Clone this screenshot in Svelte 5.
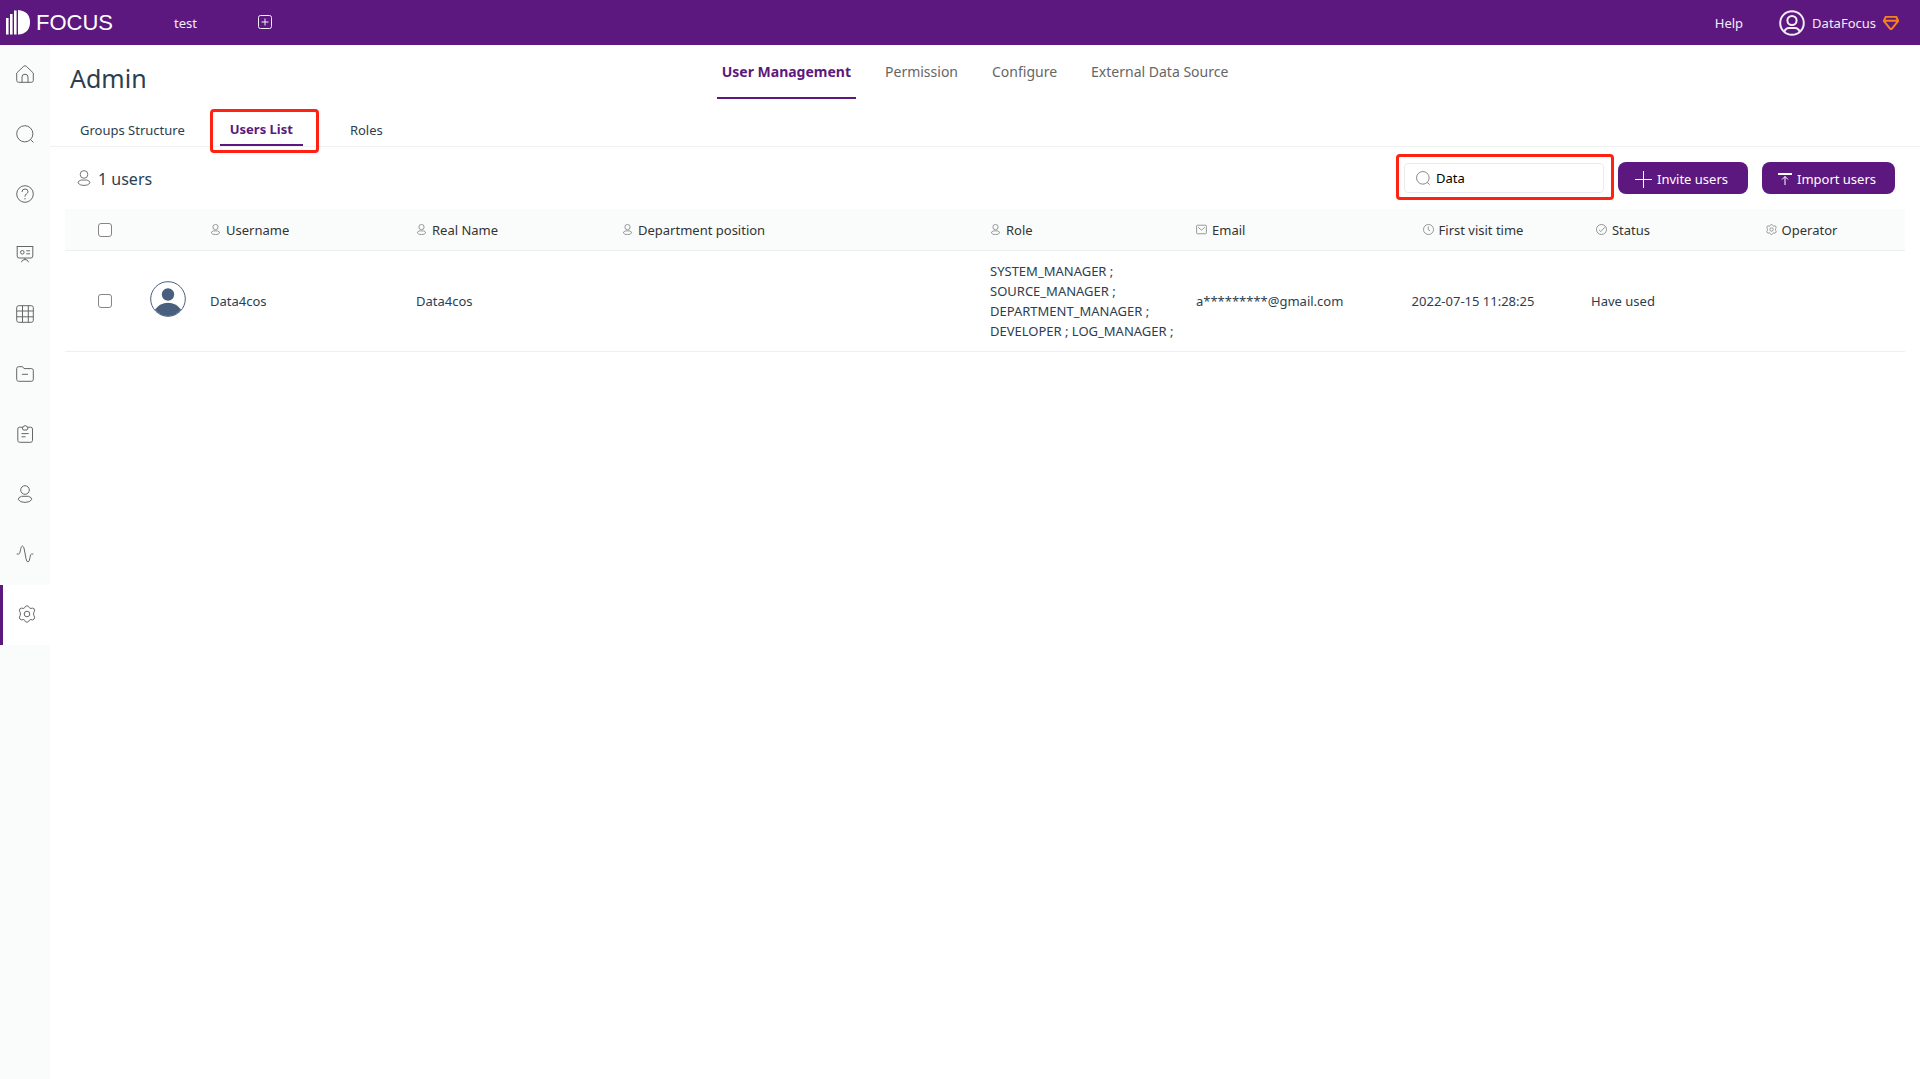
<script>
  let search = $state('Data');
  let page = $state('User Management');
  let tab = $state('Users List');

  const pages = ['User Management', 'Permission', 'Configure', 'External Data Source'];
  const tabs = ['Groups Structure', 'Users List', 'Roles'];
  const nav = ['home', 'search', 'help', 'board', 'table', 'folder', 'task', 'user', 'pulse', 'gear'];

  const columns = [
    { label: 'Username', icon: 'user' },
    { label: 'Real Name', icon: 'user' },
    { label: 'Department position', icon: 'user' },
    { label: 'Role', icon: 'user' },
    { label: 'Email', icon: 'mail' },
    { label: 'First visit time', icon: 'clock', center: true },
    { label: 'Status', icon: 'check', center: true },
    { label: 'Operator', icon: 'gear', center: true }
  ];

  // check, avatar, then one width per column
  const widths = [80, 61, 206, 206, 368, 206, 206, 150, 150, 207];

  const users = [
    {
      username: 'Data4cos',
      realName: 'Data4cos',
      department: '',
      roles: ['SYSTEM_MANAGER', 'SOURCE_MANAGER', 'DEPARTMENT_MANAGER', 'DEVELOPER', 'LOG_MANAGER'],
      email: 'a*********@gmail.com',
      visited: '2022-07-15 11:28:25',
      status: 'Have used'
    }
  ];
</script>

{#snippet icon(name, cls)}
  <svg class="icon {cls}" viewBox="0 0 18 18" aria-hidden="true">
    {#if name === 'home'}
      <path d="M.7 8 L7.8 1.2 Q9 .2 10.2 1.2 L17.3 8 V15.4 Q17.3 17.3 15.4 17.3 H2.6 Q.7 17.3 .7 15.4 Z" />
      <path d="M6 17.3 V12 Q6 9.2 9 9.2 Q12 9.2 12 12 V17.3" />
    {:else if name === 'search'}
      <circle cx="8.8" cy="8.8" r="8.1" />
      <path d="M14.5 14.6 L17.5 17.5" />
    {:else if name === 'help'}
      <circle cx="9" cy="9" r="8.3" />
      <path d="M6 7 Q6 4 9 4 Q12 4 12 6.6 Q12 8 10.3 9 Q9 9.8 9 11.6 M9 13 V14.4" />
    {:else if name === 'board'}
      <path d="M.7 1.5 H17.3 M1.2 1.5 V11 Q1.2 13 3 13 H15 Q16.8 13 16.8 11 V1.5 M9 13 V14.5 M5.4 17.2 Q6 14.5 9 14.5 Q12 14.5 12.6 17.2" />
      <circle cx="6.3" cy="7.3" r="1.8" />
      <path d="M10.3 5.8 H14 M10.3 8.8 H14" />
    {:else if name === 'table'}
      <rect x=".7" y=".7" width="16.6" height="16.6" rx="2" />
      <path d="M6.5 .7 V17.3 M12.3 .7 V17.3 M.7 6 H17.3 M.7 11.8 H17.3" />
    {:else if name === 'folder'}
      <path d="M.7 14.4 V3.6 Q.7 1.7 2.6 1.7 H6 Q7 1.7 7.4 2.6 L8 3.6 H15.4 Q17.3 3.6 17.3 5.5 V14.4 Q17.3 16.3 15.4 16.3 H2.6 Q.7 16.3 .7 14.4 Z M6 9.3 H12" />
    {:else if name === 'task'}
      <path d="M6 2.2 H3.7 Q1.8 2.2 1.8 4 V15.4 Q1.8 17.3 3.7 17.3 H14.6 Q16.5 17.3 16.5 15.4 V4 Q16.5 2.2 14.6 2.2 H12.3 M6 2.2 L7.2 5 H11 L12.3 2.2 H11 Q11 .7 9.2 .7 Q7.3 .7 7.3 2.2 Z M5.5 8.6 H12.7 M5.5 11.8 H9.5" />
    {:else if name === 'user'}
      <circle cx="9" cy="5" r="4.3" />
      <path d="M5.6 11.3 H12.4 Q15.8 12.3 15.8 14.5 Q14 17.4 9 17.4 Q4 17.4 2.2 14.5 Q2.2 12.3 5.6 11.3 Z" />
    {:else if name === 'pulse'}
      <path d="M.7 9 H2.5 Q3.6 9 4 7.2 Q5 1 6.5 1 Q8 1 8.6 6 L10 13.6 Q10.6 17 12 17 Q13.4 17 14 12.5 Q14.3 9 15.6 9 H17.3" />
    {:else if name === 'gear'}
      <path d="M7.3 1.5 Q9 -.1 10.7 1.5 L11.4 2.8 Q12 3.6 13 3.4 L14.6 3.1 Q16.8 3.4 16.6 5.8 L15.8 7.4 Q15.3 9 15.8 10.4 L16.6 12.2 Q16.8 14.4 14.6 14.9 L13 14.6 Q12 14.4 11.4 15.2 L10.7 16.5 Q9 18.1 7.3 16.5 L6.6 15.2 Q6 14.4 5 14.6 L3.4 14.9 Q1.2 14.4 1.4 12.2 L2.2 10.4 Q2.7 9 2.2 7.4 L1.4 5.8 Q1.2 3.4 3.4 3.1 L5 3.4 Q6 3.6 6.6 2.8 Z" />
      <circle cx="9" cy="9" r="2.8" />
    {:else if name === 'mail'}
      <rect x="1" y="2" width="16" height="14" rx="1.5" />
      <path d="M3.6 5.5 L9 10 L14.4 5.5" />
    {:else if name === 'clock'}
      <circle cx="9" cy="9" r="8.2" />
      <path d="M8.6 4 V9.4 L11.6 11.4" />
    {:else if name === 'check'}
      <circle cx="9" cy="9" r="8.2" />
      <path d="M4.8 9.4 L8 12.4 L14.6 5.2" />
    {/if}
  </svg>
{/snippet}

<header class="topbar">
  <a class="logo" href="#home">
    <svg width="24" height="25" viewBox="0 0 24 25" aria-hidden="true">
      <path d="M0 8 H2.6 V24.6 H0 Z M4 4 H6.6 V24.6 H4 Z M8 .6 H10.6 V24.6 H8 Z M12 0 Q24 1 24 12.3 Q24 23.6 12 24.6 Z" />
    </svg>
    <span>FOCUS</span>
  </a>
  <a class="project" href="#test">test</a>
  <button class="add" aria-label="Add">
    <svg width="14" height="14" viewBox="0 0 14 14"><rect x=".5" y=".5" width="13" height="13" rx="2" /><path d="M7 3.5 V10.5 M3.5 7 H10.5" /></svg>
  </button>
  <a class="help" href="#help">Help</a>
  <button class="account">
    <svg width="26" height="26" viewBox="0 0 26 26" aria-hidden="true">
      <circle cx="13" cy="13" r="11.8" />
      <circle cx="13" cy="10.5" r="4.6" />
      <path d="M5.4 21.8 Q6.5 18 10 18 H16 Q19.5 18 20.6 21.8" />
    </svg>
    <span>DataFocus</span>
    <svg class="gem" width="16" height="14" viewBox="0 0 16 14" aria-hidden="true">
      <path d="M2.8 .8 H13.2 L15.2 4.8 L9 12.6 Q8 13.6 7 12.6 L.8 4.8 Z M1 4.8 H15" />
    </svg>
  </button>
</header>

<div class="body">
  <nav class="side">
    {#each nav as item}
      <a href="#{item}" class:active={item === 'gear'} aria-label={item}>{@render icon(item, 'md')}</a>
    {/each}
  </nav>

  <main>
    <div class="head">
      <h1>Admin</h1>
      <div class="pages">
        {#each pages as p}
          <button class:on={page === p} onclick={() => (page = p)}>{p}</button>
        {/each}
      </div>
    </div>

    <div class="tabs">
      {#each tabs as t}
        <div class="tab" class:marked={t === 'Users List'}>
          <button class:on={tab === t} onclick={() => (tab = t)}>{t}</button>
        </div>
      {/each}
    </div>

    <div class="toolbar">
      {@render icon('user', 'count')}
      <span class="total">{users.length} users</span>
      <label class="search">
        {@render icon('search', 'sm')}
        <input type="text" bind:value={search} aria-label="Search users" />
      </label>
      <button class="primary">
        <svg width="17" height="17" viewBox="0 0 17 17" aria-hidden="true"><path d="M8.5 0 V17 M0 8.5 H17" /></svg>
        Invite users
      </button>
      <button class="primary import">
        <svg width="14" height="14" viewBox="0 0 14 14" aria-hidden="true"><path class="bar" d="M0 2 H14" /><path d="M7 13 V4.5 M4 7.5 L7 4.5 L10 7.5" /></svg>
        Import users
      </button>
    </div>

    <table>
      <colgroup>
        {#each widths as w}<col style="width: {w}px" />{/each}
      </colgroup>
      <thead>
        <tr>
          <th class="pick"><input type="checkbox" aria-label="Select all" /></th>
          <th></th>
          {#each columns as c}
            <th class:center={c.center}>{@render icon(c.icon, 'xs')}{c.label}</th>
          {/each}
        </tr>
      </thead>
      <tbody>
        {#each users as u}
          <tr>
            <td class="pick"><input type="checkbox" aria-label="Select {u.username}" /></td>
            <td class="face">
              <svg class="avatar" viewBox="0 0 36 36" aria-hidden="true">
                <circle class="ring" cx="18" cy="18" r="17.3" />
                <circle cx="18" cy="13.5" r="6.2" />
                <path d="M5 28.4 Q10 21.8 18 21.8 Q26 21.8 31 28.4 Q26 35 18 35 Q10 35 5 28.4 Z" />
              </svg>
            </td>
            <td>{u.username}</td>
            <td>{u.realName}</td>
            <td>{u.department}</td>
            <td>{u.roles.map((r) => r + ' ;').join(' ')}</td>
            <td>{u.email}</td>
            <td class="center">{u.visited}</td>
            <td class="center">{u.status}</td>
            <td></td>
          </tr>
        {/each}
      </tbody>
    </table>
  </main>
</div>

<style>
  :global(body) { background: #fff; color: #2c3e50; font-family: 'Noto Sans', 'Open Sans', sans-serif; font-size: 13px; line-height: 20px; }
  :global(#app) { min-height: 100vh; display: flex; flex-direction: column; }
  button { border: 0; background: none; padding: 0; font: inherit; color: inherit; cursor: pointer; }
  a { color: inherit; text-decoration: none; }
  svg { display: block; flex: none; }
  .icon { fill: none; stroke: #666; stroke-width: 1; }
  .md { width: 18px; height: 18px; }
  .count { width: 16px; height: 16px; }
  .sm { width: 14px; height: 14px; }
  .xs { width: 11px; height: 11px; display: inline-block; margin-right: 5px; stroke: #888; stroke-width: 1.4; }

  .topbar { display: flex; align-items: center; height: 45px; box-sizing: border-box; padding: 0 21px 0 6px; background: #5d187f; color: #f3edf6; }
  .logo { display: flex; align-items: center; gap: 6px; width: 168px; color: #fff; font-family: 'Liberation Sans', Arial, sans-serif; font-size: 22px; }
  .logo svg { fill: #fff; }
  .project { width: 84px; }
  .add svg { fill: none; stroke: #f3edf6; stroke-width: 1; }
  .add { padding-bottom: 2px; }
  .help { margin-left: auto; }
  .account { display: flex; align-items: center; gap: 7px; margin-left: 36px; }
  .account svg { fill: none; stroke: #f3edf6; stroke-width: 2; }
  .account .gem { stroke: #f5821f; }

  .body { display: flex; flex: 1; }
  .side { width: 50px; flex: none; background: #fafcfb; }
  .side a { display: flex; align-items: center; justify-content: center; height: 60px; box-sizing: border-box; padding-bottom: 2px; }
  .side .active { background: #fff; border-left: 3px solid #5d187f; }
  main { flex: 1; min-width: 0; }

  .head { display: grid; grid-template-columns: 1fr auto 1fr; padding: 0 20px 10px 0; }
  h1 { margin: 0; padding: 15px 0 0 20px; font-size: 25px; font-weight: 400; line-height: 36px; }
  .pages { display: flex; gap: 24px; }
  .pages button { height: 54px; box-sizing: border-box; padding: 2px 5px 0; border-bottom: 2px solid transparent; font-size: 14px; color: #666; }
  .pages .on { border-color: #5d187f; color: #5d187f; font-weight: 700; }

  .tabs { display: flex; gap: 25px; height: 37px; padding-left: 20px; border-bottom: 1px solid #f0f2f2; }
  .tab { position: relative; display: flex; }
  .tab button { padding: 6px 10px 0; border-bottom: 2px solid transparent; }
  .tab .on { padding-top: 4px; border-color: #5d187f; color: #5d187f; font-weight: 700; }
  .marked { margin-right: 12px; }
  .marked::after { content: ''; position: absolute; inset: 0 -16px -7px -10px; border: 3px solid #ff2213; border-radius: 4px; pointer-events: none; }

  .toolbar { display: flex; align-items: center; height: 62px; padding: 0 25px 0 26px; }
  .total { margin-left: 6px; padding-top: 2px; font-size: 16px; }
  .search { position: relative; display: flex; align-items: center; gap: 6px; width: 200px; height: 30px; box-sizing: border-box; margin-left: auto; padding: 0 12px 0 11px; border: 1px solid #e8ebee; border-radius: 4px; }
  .search input { flex: 1; min-width: 0; padding: 0; border: 0; outline: 0; background: none; font: inherit; color: #000; }
  .search::after { content: ''; position: absolute; inset: -10px -11px -8px -9px; border: 3px solid #ff2213; border-radius: 4px; pointer-events: none; }
  .primary { display: flex; align-items: center; justify-content: center; gap: 5px; width: 130px; height: 32px; margin-left: 14px; padding: 2px 3px 0 0; border-radius: 8px; background: #5d187f; color: #fff; }
  .primary svg { fill: none; stroke: #fff; stroke-width: 1; }
  .primary .bar { stroke-width: 2; }
  .import { width: 133px; }

  table { width: calc(100% - 30px); margin: 0 15px; table-layout: fixed; border-collapse: separate; border-spacing: 0; }
  th, td { padding: 10px 4px; border-bottom: 1px solid #eef0f0; text-align: left; font-weight: 400; }
  th { padding: 11px 4px 10px; background: #fafcfb; color: #333; }
  .center { text-align: center; }
  .pick { text-align: center; }
  .face { padding: 0 5px 5px; }
  input[type='checkbox'] { appearance: none; display: block; width: 14px; height: 14px; margin: 0 auto; border: 1px solid #858585; border-radius: 3px; background: #fff; }
  input[type='checkbox']:checked { background: #5d187f; }
  .avatar { width: 36px; height: 36px; fill: #485f7e; }
  .ring { fill: none; stroke: #485f7e; stroke-width: 1; }
</style>
